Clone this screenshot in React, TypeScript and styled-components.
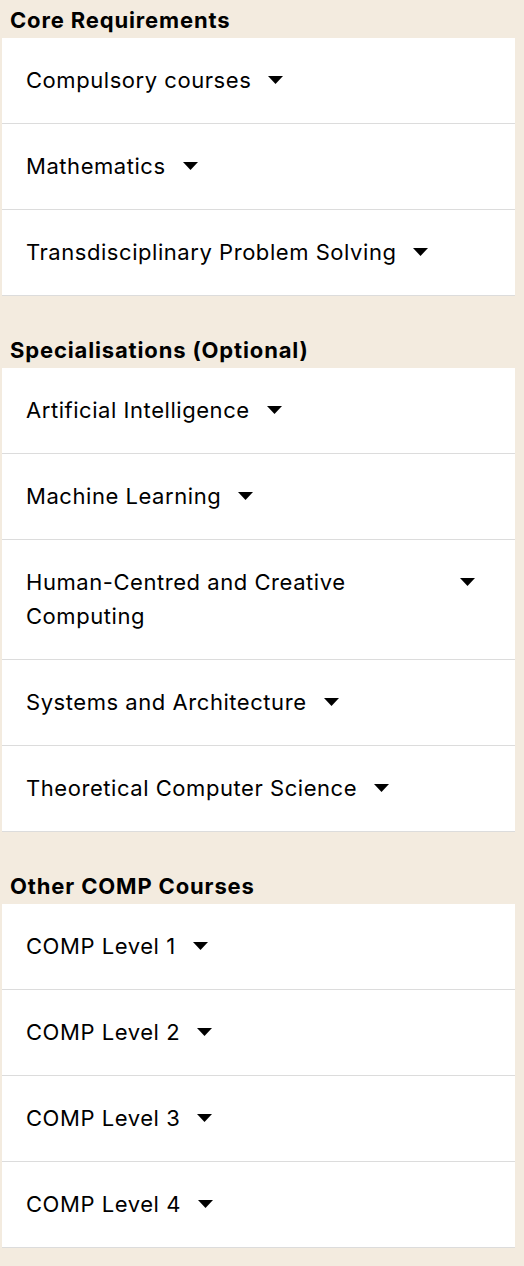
import React from "react";
import styled, { createGlobalStyle } from "styled-components";

const GlobalStyle = createGlobalStyle`
  html, body {
    margin: 0;
    padding: 0;
    background: #f3ebdf;
  }
  body {
    font-family: Inter, "Noto Sans", sans-serif;
    color: #000;
  }
`;

const Page = styled.div`
  width: 524px;
  padding: 0 9px 19px 2px;
  box-sizing: border-box;
  display: flex;
  flex-direction: column;
  gap: 34px;
`;

const Section = styled.section`
  display: flex;
  flex-direction: column;
`;

const Heading = styled.h2`
  margin: 0;
  padding: 3px 8px 1px;
  font-size: 22px;
  line-height: 34px;
  font-weight: 700;
  letter-spacing: 0.85px;
`;

const Card = styled.div`
  background: #fff;
  display: flex;
  flex-direction: column;
`;

const Row = styled.button`
  all: unset;
  box-sizing: border-box;
  display: flex;
  align-items: flex-start;
  padding: 25px 40px 26px 24px;
  border-bottom: 1px solid #dcdcdc;
  cursor: pointer;
`;

const Label = styled.span`
  font-size: 22px;
  line-height: 34px;
  font-weight: 400;
  letter-spacing: 0.55px;
`;

const CaretBox = styled.span`
  flex: none;
  height: 34px;
  display: flex;
  align-items: center;
  margin-left: 17px;
`;

const Caret = () => (
  <CaretBox>
    <svg width="15" height="8" viewBox="0 0 15 8">
      <path d="M0 0 H15 L7.5 8 Z" fill="#000" />
    </svg>
  </CaretBox>
);

const sections = [
  {
    title: "Core Requirements",
    items: ["Compulsory courses", "Mathematics", "Transdisciplinary Problem Solving"],
  },
  {
    title: "Specialisations (Optional)",
    items: [
      "Artificial Intelligence",
      "Machine Learning",
      "Human-Centred and Creative Computing",
      "Systems and Architecture",
      "Theoretical Computer Science",
    ],
  },
  {
    title: "Other COMP Courses",
    items: ["COMP Level 1", "COMP Level 2", "COMP Level 3", "COMP Level 4"],
  },
];

export default function App() {
  return (
    <>
      <GlobalStyle />
      <Page>
        {sections.map((s) => (
          <Section key={s.title}>
            <Heading>{s.title}</Heading>
            <Card>
              {s.items.map((item) => (
                <Row key={item}>
                  <Label>{item}</Label>
                  <Caret />
                </Row>
              ))}
            </Card>
          </Section>
        ))}
      </Page>
    </>
  );
}
